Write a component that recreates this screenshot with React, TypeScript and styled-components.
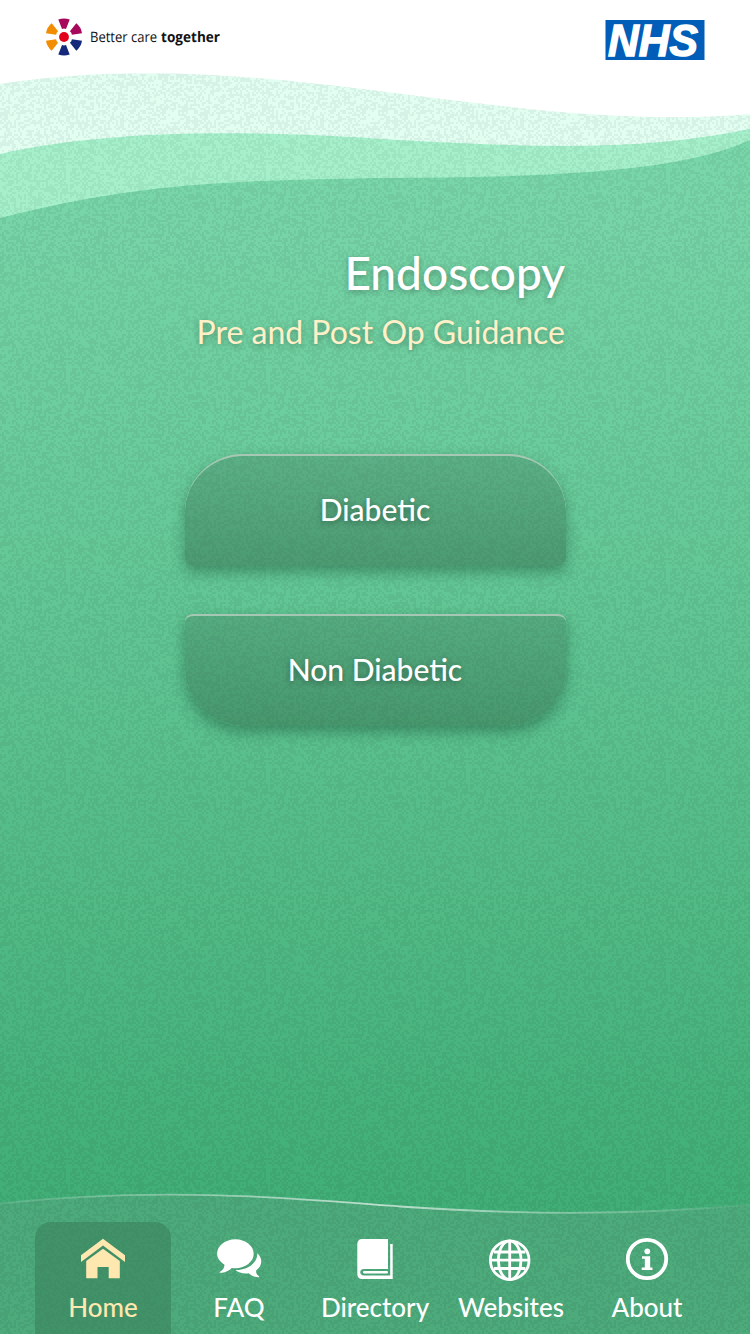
import React from "react";
import styled, { createGlobalStyle } from "styled-components";

const GlobalStyle = createGlobalStyle`
  * { box-sizing: border-box; }
  body { margin: 0; font-family: Lato, "Liberation Sans", sans-serif; }
`;

const TILE = 200;

// Random speckle made of 2px cells, repeated as a tile.
const buildGrain = () => {
  let seed = 90210;
  let d = "";
  for (let y = 0; y < TILE; y += 2) {
    for (let x = 0; x < TILE; x += 2) {
      seed = (seed + 0x6d2b79f5) | 0;
      let t = Math.imul(seed ^ (seed >>> 15), 1 | seed);
      t = (t + Math.imul(t ^ (t >>> 7), 61 | t)) ^ t;
      if (((t ^ (t >>> 14)) >>> 0) / 4294967296 < 0.5) d += `M${x} ${y}h2v2h-2z`;
    }
  }
  return d;
};
const GRAIN = buildGrain();

const Screen = styled.main`
  position: relative;
  width: 750px;
  height: 1334px;
  overflow: hidden;
  display: flex;
  flex-direction: column;
  background: #fff;
`;

const Backdrop = styled.svg`
  position: absolute;
  inset: 0;
  width: 750px;
  height: 1334px;
`;

const Header = styled.header`
  position: relative;
  display: flex;
  justify-content: space-between;
  align-items: flex-start;
  height: 120px;
  padding: 18px 45px 0;
`;

const Brand = styled.div`
  display: flex;
  align-items: center;
  gap: 7px;
  height: 38px;
`;

const BrandName = styled.svg`
  display: block;
  overflow: visible;
  font-family: "Open Sans", sans-serif;
  font-size: 14.4px;
  font-variant-ligatures: none;
  fill: #111;
  text-rendering: geometricPrecision;
`;

const NhsLogo = styled.svg`
  display: block;
  margin-top: 2px;
  overflow: visible;
  font-family: "Liberation Sans", sans-serif;
  font-weight: 700;
  font-style: italic;
`;

const Content = styled.section`
  position: relative;
  flex: 1;
  display: flex;
  flex-direction: column;
  align-items: center;
  padding-top: 125px;
`;

const Titles = styled.div`
  width: 380px;
  text-align: right;
  text-shadow: 0 2px 6px rgba(0, 0, 0, 0.3);
  white-space: nowrap;
`;

const Title = styled.h1`
  margin: 0;
  font-size: 46px;
  line-height: 56px;
  font-weight: 500;
  color: #fff;
`;

const Subtitle = styled.h2`
  margin: 11px 0 0;
  font-size: 32px;
  line-height: 40px;
  font-weight: 400;
  color: #fff0c8;
`;

const Choices = styled.div`
  display: flex;
  flex-direction: column;
  gap: 48px;
  width: 381px;
  margin-top: 102px;
`;

const Choice = styled.button<{ $edge: "top" | "bottom" }>`
  height: 112px;
  padding: 0 0 4px;
  border: 0 solid rgba(178, 200, 186, 0.85);
  border-top-width: 2px;
  border-radius: ${(p) => (p.$edge === "top" ? "58px 58px 8px 8px" : "8px 8px 58px 58px")};
  background: linear-gradient(rgba(60, 112, 84, 0.3), rgba(46, 98, 68, 0.44));
  background-clip: padding-box;
  box-shadow: 0 6px 14px rgba(20, 70, 42, 0.42);
  color: #fff;
  font: 500 30px/36px Lato, sans-serif;
  text-shadow: 0 2px 6px rgba(0, 0, 0, 0.35);
`;

const TabBar = styled.nav`
  position: relative;
  display: flex;
  height: 112px;
  padding: 0 35px;
`;

const Tab = styled.a<{ $active?: boolean }>`
  width: 136px;
  display: flex;
  flex-direction: column;
  align-items: center;
  padding-top: 16px;
  border-radius: 16px 16px 0 0;
  background: ${(p) => (p.$active ? "rgba(52, 114, 80, 0.42)" : "none")};
  color: ${(p) => (p.$active ? "#ffe8b0" : "#fff")};
  font-size: 26px;
  font-weight: 500;
  line-height: 32px;
  white-space: nowrap;
  svg { display: block; margin-bottom: 11px; overflow: visible; }
`;

const petals = [
  [0, "#a8085c"], [60, "#a8085c"], [120, "#14297b"],
  [180, "#14297b"], [240, "#f28c00"], [300, "#f28c00"],
] as const;

const Pinwheel = () => (
  <svg width="38" height="38" viewBox="-19 -19 38 38">
    {petals.map(([angle, color]) => (
      <path key={angle} d="M-5.700 -17.500Q0 -19.700 5.700 -17.500L2 -8Q0 -8.800 -2 -8Z" fill={color} transform={`rotate(${angle})`} />
    ))}
    <circle r="4.9" fill="#e2001a" />
  </svg>
);

const HomeIcon = () => (
  <svg width="46" height="42" viewBox="0 0 46 42" fill="currentColor">
    <path d="M23 .8 45 17.2v6.8L23 7.6 1 24v-6.8Z" />
    <path d="M23 10.8 39.8 23v17.2H28.7V29H17.5v11.2H6.2V23Z" />
  </svg>
);

const ChatIcon = () => (
  <svg width="46" height="42" viewBox="0 0 46 42" fill="currentColor">
    <path d="M19.4 1.2C29.5 1.2 37.7 7.7 37.7 15.7S29.5 30.2 19.4 30.2c-1.300 0-2.500-.1-3.700-.3-3.600 3.600-7.400 4.900-12 4.900v-.9c2.600-1.300 4.700-3.600 4.700-6.300 0-.4 0-.8-.1-1.200C4 23.800 1.100 20 1.100 15.700 1.100 7.700 9.300 1.200 19.400 1.200Z" />
    <path d="M41.300 15.200c2.500 2.300 4 5.200 4 8.400 0 3.500-2 6.700-5.200 9-.3 2.500 1 4.600 3 5.600v1c-4 0-7.300-1-10.300-3.900-5.200.9-10.200-.5-13.300-3.200 12.300 0 22.100-7 21.800-16.900Z" />
  </svg>
);

const BookIcon = () => (
  <svg width="46" height="42" viewBox="0 0 46 42" fill="currentColor">
    <path d="M10 1H36V31H12C9.800 31 8.200 32.400 8.200 34.300S9.800 37.600 12 37.600H38.200V6H40.700V41H10C7 41 5.300 39 5.300 36V6C5.300 3 7 1 10 1Z" />
    <rect x="11" y="33" width="25" height="2.600" rx="1.300" />
  </svg>
);

const GlobeIcon = () => (
  <svg width="46" height="42" viewBox="0 0 46 42" fill="none" stroke="currentColor" strokeWidth="2.8">
    <circle cx="21.7" cy="22.2" r="19.3" />
    <ellipse cx="21.7" cy="22.2" rx="11.3" ry="19.3" />
    <path d="M21.700 3v38.400M2.500 22.200h38.400M6 14h31.400M6 30.500h31.400" />
  </svg>
);

const InfoIcon = () => (
  <svg width="46" height="42" viewBox="0 0 46 42">
    <circle cx="23" cy="21" r="19.2" fill="none" stroke="currentColor" strokeWidth="3.8" />
    <circle cx="23.3" cy="13.3" r="2.9" fill="currentColor" />
    <path fill="currentColor" d="M18 18.300h8.200v11.200h2.300v2.400H17.700v-2.400h3.100v-8.800H18Z" />
  </svg>
);

const tabs = [
  { label: "Home", Icon: HomeIcon },
  { label: "FAQ", Icon: ChatIcon },
  { label: "Directory", Icon: BookIcon },
  { label: "Websites", Icon: GlobeIcon },
  { label: "About", Icon: InfoIcon },
];

const FOOTER_EDGE = "M0 1203.500C180 1184 330 1202 400 1206.500Q590 1220 750 1204.500";

const Waves = () => (
  <Backdrop viewBox="0 0 750 1334">
    <defs>
      <pattern id="grain" width={TILE} height={TILE} patternUnits="userSpaceOnUse">
        <path d={GRAIN} fill="#000" shapeRendering="crispEdges" />
      </pattern>
      <linearGradient id="shine" x1="0" x2="1" y1="0" y2="0">
        <stop offset="0" stopColor="#fff" stopOpacity=".1" />
        <stop offset=".5" stopColor="#fff" stopOpacity=".65" />
        <stop offset="1" stopColor="#fff" stopOpacity=".05" />
      </linearGradient>
      <linearGradient id="body" gradientUnits="userSpaceOnUse" x1="0" x2="0" y1="180" y2="1210">
        <stop offset="0" stopColor="#79d6a9" />
        <stop offset="1" stopColor="#40ae76" />
      </linearGradient>
    </defs>
    <path fill="#e1fef1" d="M0 0H750V180H0Z" />
    <path fill="#a5f0cb" d="M0 154C120 127 270 132 375 138.500C560 150 650 149 750 129V230H0Z" />
    <path fill="url(#body)" d="M0 218C150 179 260 181 375 178C560 177 680 172 750 140V1334H0Z" />
    <path fill="#76a08e" fillOpacity=".22" d={`${FOOTER_EDGE}V1334H0Z`} />
    <rect width="750" height="1334" fill="url(#grain)" opacity=".05" />
    <path fill="none" stroke="url(#shine)" strokeWidth="1.8" d={FOOTER_EDGE} />
    <path fill="#fff" d="M0 0H750V114C500 135 270 43 0 84Z" />
  </Backdrop>
);

export default function App() {
  return (
    <>
      <GlobalStyle />
      <Screen>
        <Waves />
        <Header>
          <Brand>
            <Pinwheel />
            <BrandName width="132" height="24">
              <text x="0" y="16.5" textLength="67" lengthAdjust="spacingAndGlyphs">Better care</text>
              <text x="71" y="16.5" textLength="59" lengthAdjust="spacingAndGlyphs" fontWeight="700">together</text>
            </BrandName>
          </Brand>
          <NhsLogo width="100" height="40" viewBox="0 0 100 40">
            <rect x=".5" width="99" height="40" fill="#005eb8" />
            <text x="3" y="35.5" fontSize="44.5" textLength="90" lengthAdjust="spacingAndGlyphs" fill="#fff" stroke="#fff" strokeWidth="1.4">NHS</text>
          </NhsLogo>
        </Header>
        <Content>
          <Titles>
            <Title>Endoscopy</Title>
            <Subtitle>Pre and Post Op Guidance</Subtitle>
          </Titles>
          <Choices>
            <Choice $edge="top">Diabetic</Choice>
            <Choice $edge="bottom">Non Diabetic</Choice>
          </Choices>
        </Content>
        <TabBar>
          {tabs.map(({ label, Icon }, i) => (
            <Tab key={label} $active={i === 0}>
              <Icon />
              {label}
            </Tab>
          ))}
        </TabBar>
      </Screen>
    </>
  );
}
